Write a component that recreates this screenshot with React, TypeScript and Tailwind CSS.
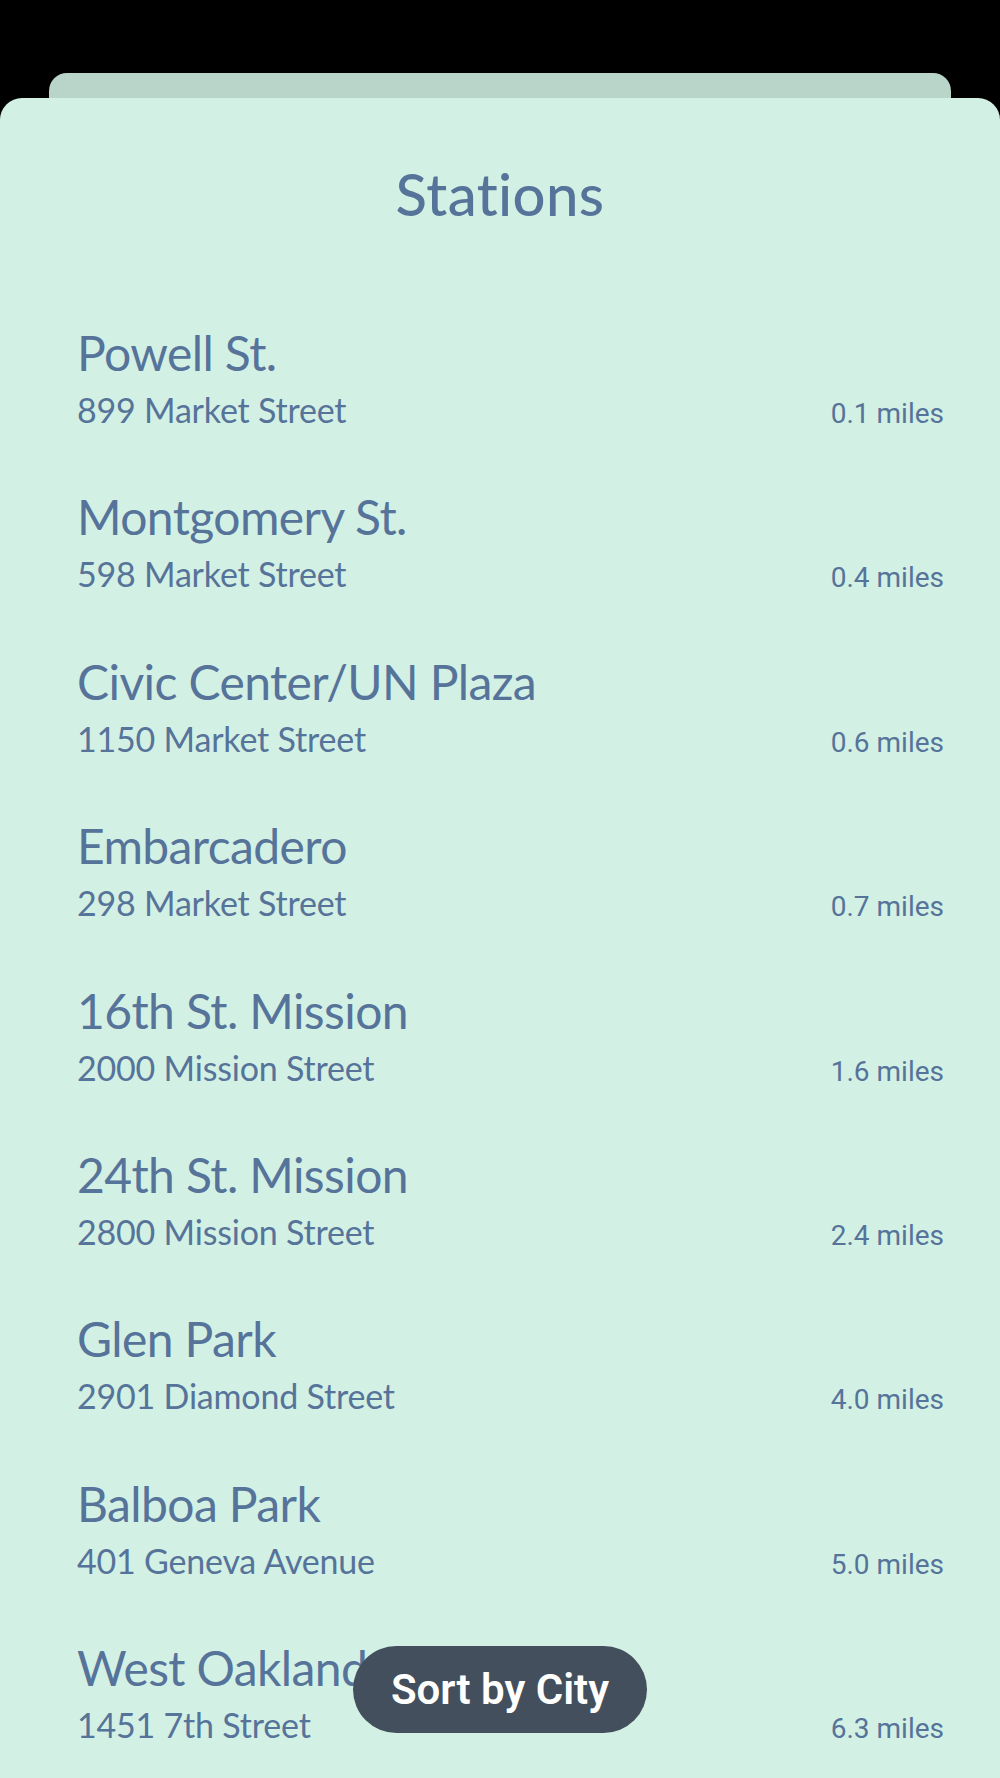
import React from "react";

type Station = {
  name: string;
  address: string;
  distance: string;
};

const stations: Station[] = [
  { name: "Powell St.", address: "899 Market Street", distance: "0.1 miles" },
  { name: "Montgomery St.", address: "598 Market Street", distance: "0.4 miles" },
  { name: "Civic Center/UN Plaza", address: "1150 Market Street", distance: "0.6 miles" },
  { name: "Embarcadero", address: "298 Market Street", distance: "0.7 miles" },
  { name: "16th St. Mission", address: "2000 Mission Street", distance: "1.6 miles" },
  { name: "24th St. Mission", address: "2800 Mission Street", distance: "2.4 miles" },
  { name: "Glen Park", address: "2901 Diamond Street", distance: "4.0 miles" },
  { name: "Balboa Park", address: "401 Geneva Avenue", distance: "5.0 miles" },
  { name: "West Oakland", address: "1451 7th Street", distance: "6.3 miles" },
];

function StationRow({ station }: { station: Station }) {
  return (
    <li className="flex flex-col">
      <span className="text-[48px] leading-[56px] font-['Lato',sans-serif] tracking-[-0.6px]">
        {station.name}
      </span>
      <div className="mt-[9px] flex items-baseline justify-between">
        <span className="text-[34px] leading-[40px] font-['Lato',sans-serif] tracking-[-0.2px]">
          {station.address}
        </span>
        <span className="text-[28px] leading-[40px] font-['Roboto',sans-serif]">
          {station.distance}
        </span>
      </div>
    </li>
  );
}

export default function App() {
  return (
    <div className="relative flex h-screen flex-col overflow-hidden bg-black pt-[73px]">
      {/* stacked sheet behind */}
      <div className="mx-[49px] h-[25px] shrink-0 rounded-t-[18px] bg-[#b9d4c9]" />

      {/* main sheet */}
      <div className="flex-1 overflow-hidden rounded-t-[22px] bg-[#d3f0e4] pt-[64px] text-[#56739a]">
        <h1 className="text-center text-[58px] leading-[64px] font-['Lato',sans-serif] font-medium tracking-[0.4px]">
          Stations
        </h1>
        <ul className="mt-[99px] flex flex-col gap-[55.4px] pl-[77px] pr-[56px]">
          {stations.map((s) => (
            <StationRow key={s.name} station={s} />
          ))}
        </ul>
      </div>

      <button className="absolute bottom-[45px] left-1/2 flex h-[87px] w-[294px] -translate-x-1/2 items-center justify-center rounded-full bg-[#434f5c] text-[42px] font-semibold text-white font-['Roboto',sans-serif]">
        Sort by City
      </button>
    </div>
  );
}
